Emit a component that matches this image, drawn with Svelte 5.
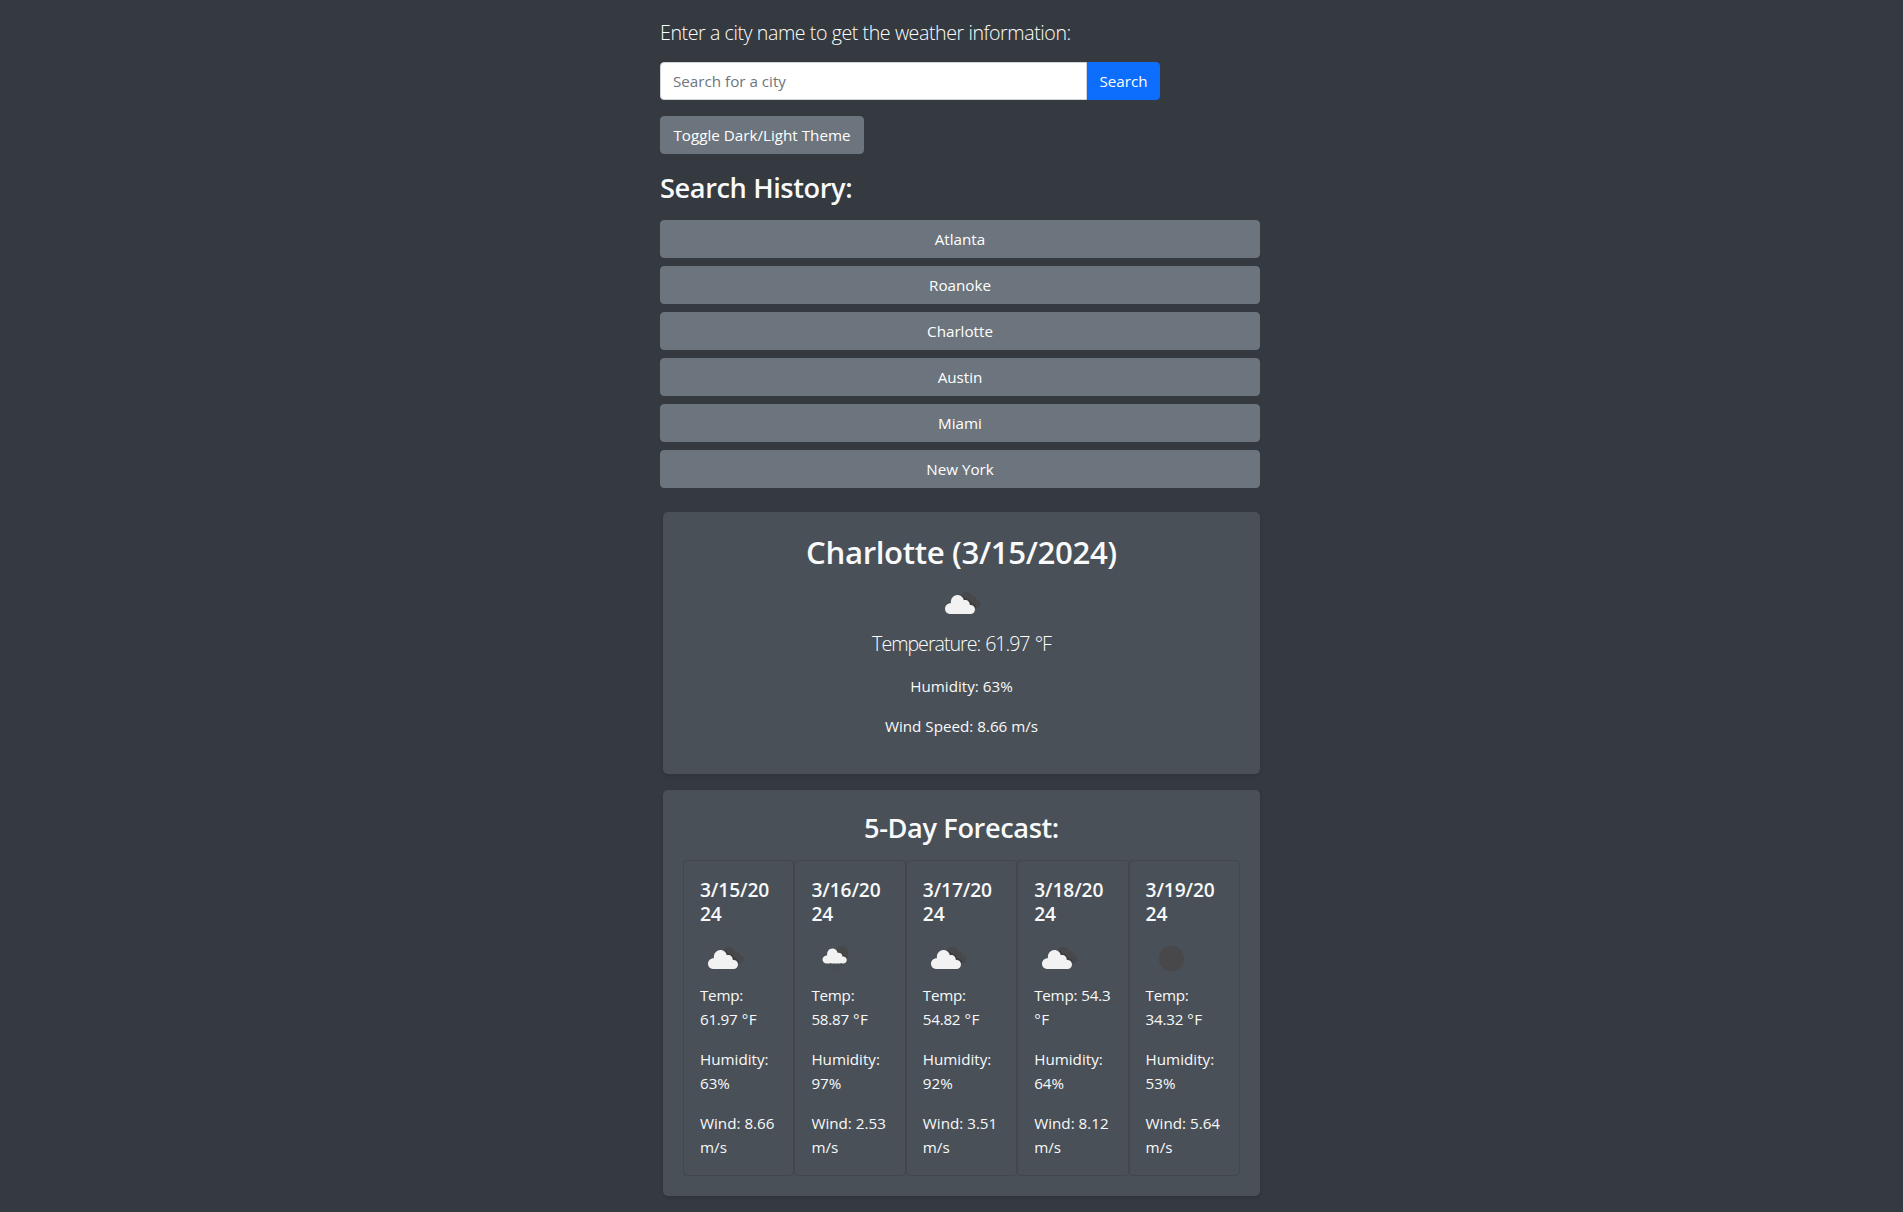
<script>
  const cities = ['Atlanta', 'Roanoke', 'Charlotte', 'Austin', 'Miami', 'New York'];
  const days = [
    { date: '3/15/2024', icon: 'clouds', temp: '61.97', humidity: 63, wind: '8.66' },
    { date: '3/16/2024', icon: 'rain', temp: '58.87', humidity: 97, wind: '2.53' },
    { date: '3/17/2024', icon: 'clouds', temp: '54.82', humidity: 92, wind: '3.51' },
    { date: '3/18/2024', icon: 'clouds', temp: '54.3', humidity: 64, wind: '8.12' },
    { date: '3/19/2024', icon: 'clear', temp: '34.32', humidity: 53, wind: '5.64' }
  ];
</script>

{#snippet weatherIcon(kind)}
  <svg class="icon" viewBox="0 0 50 50" aria-hidden="true">
    {#if kind === 'clouds'}
      <path fill="#48484a" d="M23 18.5 C24 15.6 26.3 14 29 14 C32 14 34.2 15.8 35 18.4 C37.5 18 39.4 19.7 39.4 22.2 C41.8 22.3 43.4 24 43.4 26.3 C43.4 28.6 41.8 30.2 39.6 30.4 L34 27 Z" />
      <path fill="#3b3d40" d="M24.5 18.7 C26 19.5 27 20.8 27.5 22.1 C30.2 21.4 32.7 23.2 33 26.2 C35.6 26.1 37.6 27.8 38 29.8 L39.2 29.8 C38.6 27.3 36.8 25.4 34.4 25 C33.7 22.2 31.3 20.4 28.4 20.5 C27.6 19.2 26.6 18.2 25.3 17.6 Z" />
      <path fill="#f2f2f2" d="M13 36 C10.2 36 8 33.6 8 30.8 C8 27.7 10.6 25.2 13.9 25.3 C13.5 20.6 16.3 17 20.3 17 C23.6 17 26.2 19.1 26.8 22.3 C30 21.4 32.8 23.7 32.8 27 C35.8 26.7 38 28.8 38 31.5 C38 34.1 36 36 33.5 36 Z" />
    {:else if kind === 'rain'}
      <circle cx="30.8" cy="19.9" r="6.8" fill="#48484a" />
      <path fill="#3b3d40" d="M22.8 15.7 C25.3 16.2 26.8 18.2 27.3 19.7 C30.3 19.2 32.3 21.2 32.6 23.4 C34.3 23.4 35.8 24.4 36.3 25.7 L34.3 27.2 L24.3 22.2 Z" />
      <path fill="#f2f2f2" d="M15.6 30.4 C13.2 30.4 11.5 28.6 11.5 26.4 C11.5 24.1 13.5 22.3 16.1 22.4 C15.8 18.5 18 15.6 21.4 15.6 C24.2 15.6 26.1 17.2 26.6 19.8 C29.2 19.2 31.4 20.9 31.5 23.5 C34 23.3 35.8 24.9 35.8 27 C35.8 29 34.2 30.4 32.2 30.4 Z" />
      <g stroke="#48484a" stroke-width="1.3">
        <path d="M19.7 30.3 L19 32 M23.4 31.8 L22.2 34.3 M27.4 31.8 L26.2 34.3 M18.4 34 L17.8 35.5 M21.7 35.8 L21 37.5 M25.7 35.5 L25 37.2 M30.4 30.3 L29.8 31.8" />
      </g>
    {:else}
      <circle cx="25.4" cy="25.5" r="12.6" fill="#48484a" />
    {/if}
  </svg>
{/snippet}

<main>
  <p class="lead">Enter a city name to get the weather information:</p>
  <div class="search">
    <input type="text" placeholder="Search for a city" />
    <button class="primary">Search</button>
  </div>
  <button class="toggle">Toggle Dark/Light Theme</button>
  <h3>Search History:</h3>
  <div class="history">
    {#each cities as city}
      <button>{city}</button>
    {/each}
  </div>

  <section class="card current">
    <h2>Charlotte (3/15/2024)</h2>
    {@render weatherIcon('clouds')}
    <p class="lead">Temperature: 61.97 °F</p>
    <p>Humidity: 63%</p>
    <p>Wind Speed: 8.66 m/s</p>
  </section>

  <section class="card forecast">
    <h3>5-Day Forecast:</h3>
    <div class="days">
      {#each days as day}
        <article>
          <h5>{day.date}</h5>
          {@render weatherIcon(day.icon)}
          <p class="temp">Temp: {day.temp} <span>°F</span></p>
          <p>Humidity: {day.humidity}%</p>
          <p>Wind: {day.wind} m/s</p>
        </article>
      {/each}
    </div>
  </section>
</main>

<style>
  :global(body) {
    background: #343a40;
    overflow: hidden;
  }
  * {
    box-sizing: border-box;
  }
  main {
    width: 600px;
    height: 1212px;
    margin-left: 660px;
    padding-top: 18px;
    font: 400 15.2px/24px 'Segoe UI', 'Open Sans', 'Noto Sans', sans-serif;
    color: #f8f9fa;
  }
  p,
  h2,
  h3,
  h5 {
    margin: 0;
  }
  .lead {
    font-size: 19.6px;
    line-height: 30px;
    font-weight: 300;
    letter-spacing: -0.42px;
    color: #fff;
  }
  .search {
    display: flex;
    width: 500px;
    margin: 14px 0 16px;
  }
  input,
  button {
    height: 38px;
    padding: 6px 12px;
    border: 1px solid #6c757d;
    border-radius: 4px;
    font: inherit;
    color: #fff;
    background: #6c757d;
  }
  input {
    flex: 1;
    min-width: 0;
    border-color: #ced4da;
    border-radius: 4px 0 0 4px;
    background: #fff;
  }
  input::placeholder {
    color: #6c757d;
    opacity: 1;
  }
  .primary {
    width: 73px;
    padding-right: 0;
    padding-left: 0;
    border-color: #0d6efd;
    border-radius: 0 4px 4px 0;
    background: #0d6efd;
  }
  .toggle {
    display: block;
    width: 204px;
    padding-right: 0;
    padding-left: 0;
    white-space: nowrap;
  }
  h3 {
    font-size: 27.2px;
    line-height: 34px;
    font-weight: 600;
    letter-spacing: -0.4px;
  }
  main > h3 {
    margin: 17px 0 15px;
  }
  .history {
    display: grid;
    gap: 8px;
  }
  .card {
    margin-left: 3px;
    padding: 21px 20px 20px;
    border-radius: 5px;
    background: #495057;
    box-shadow: 0 2px 4px rgba(0, 0, 0, 0.1);
    text-align: center;
  }
  .current {
    height: 262px;
    margin-top: 24px;
  }
  h2 {
    font-size: 31.2px;
    line-height: 39px;
    font-weight: 600;
    letter-spacing: -0.37px;
    margin-bottom: 6px;
  }
  .icon {
    display: block;
    width: 50px;
    height: 50px;
  }
  .current .icon {
    margin: 0 auto;
  }
  .current p {
    margin-bottom: 16px;
  }
  .current .lead {
    padding-top: 1px;
    margin-bottom: 15px;
    letter-spacing: -1px;
    word-spacing: 1px;
  }
  .forecast {
    height: 406px;
    margin-top: 16px;
  }
  .forecast h3 {
    margin-bottom: 15px;
  }
  .days {
    display: grid;
    grid-template-columns: repeat(5, 1fr);
    text-align: left;
  }
  article {
    min-width: 0;
    height: 316px;
    padding: 17px 16px 15px;
    border: 1px solid #42464d;
    border-radius: 4px;
  }
  h5 {
    margin-bottom: 7px;
    font-size: 19.2px;
    line-height: 24px;
    font-weight: 600;
    letter-spacing: -0.1px;
    overflow-wrap: anywhere;
  }
  .temp {
    letter-spacing: -0.25px;
    word-spacing: 0.5px;
  }
  .temp span {
    letter-spacing: 0.5px;
  }
  article p + p {
    margin-top: 16px;
  }
</style>
